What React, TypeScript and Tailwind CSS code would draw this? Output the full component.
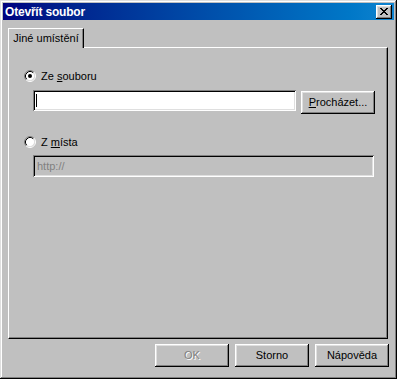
import React from "react"

const raised =
  "bg-[#c0c0c0] shadow-[inset_-1px_-1px_#000000,inset_1px_1px_#ffffff,inset_-2px_-2px_#808080,inset_2px_2px_#dfdfdf]"
const sunken =
  "shadow-[inset_1px_1px_#808080,inset_-1px_-1px_#ffffff,inset_2px_2px_#000000,inset_-2px_-2px_#dfdfdf]"

function Radio({ checked }: { checked?: boolean }) {
  return (
    <svg width="12" height="12" viewBox="0 0 12 12" className="shrink-0">
      <circle cx="6" cy="6" r="4.5" fill="#ffffff" />
      <path d="M2.11 9.89 A5.5 5.5 0 0 1 9.89 2.11" fill="none" stroke="#808080" />
      <path d="M9.89 2.11 A5.5 5.5 0 0 1 2.11 9.89" fill="none" stroke="#ffffff" />
      <path d="M2.82 9.18 A4.5 4.5 0 0 1 9.18 2.82" fill="none" stroke="#000000" />
      <path d="M9.18 2.82 A4.5 4.5 0 0 1 2.82 9.18" fill="none" stroke="#dfdfdf" />
      {checked && <circle cx="6" cy="6" r="2" fill="#000000" />}
    </svg>
  )
}

function Button({ children, disabled }: { children: React.ReactNode; disabled?: boolean }) {
  return (
    <div
      className={`${raised} w-[74px] h-[23px] flex items-center justify-center ${
        disabled ? "text-[#808080] [text-shadow:1px_1px_#ffffff]" : "text-black"
      }`}
    >
      {children}
    </div>
  )
}

export default function App() {
  return (
    <div className="w-[400px] h-[380px] bg-white font-['Liberation_Sans',Arial,sans-serif] text-[11px] text-black">
      <div className="w-[397px] h-[379px] bg-[#c0c0c0] p-[3px] flex flex-col shadow-[inset_-1px_-1px_#000000,inset_1px_1px_#dfdfdf,inset_-2px_-2px_#808080,inset_2px_2px_#ffffff]">
        {/* title bar */}
        <div className="h-[17px] bg-gradient-to-r from-[#000080] to-[#1084d0] flex items-center justify-between pl-[2px] pr-[2px]">
          <span className="text-white font-bold text-[12px] tracking-[-0.2px]">Otevřít soubor</span>
          <div className={`${raised} w-[16px] h-[14px] flex items-center justify-center`}>
            <svg width="8" height="7" viewBox="0 0 8 7">
              <path d="M0 0h2v1h1v1h2v-1h1v-1h2v1h-1v1h-1v1h-1v1h1v1h1v1h1v1h-2v-1h-1v-1h-2v1h-1v1h-2v-1h1v-1h1v-1h1v-1h-1v-1h-1v-1h-1z" fill="#000000" />
            </svg>
          </div>
        </div>

        {/* body */}
        <div className="flex-1 flex flex-col pl-[5px] pr-[6px] pt-[8px] pb-[9px]">
          <div className="flex">
            <div className="h-[20px] w-[76px] border-l border-t border-white shadow-[inset_-1px_0_#808080] border-r border-r-black flex items-center justify-center pb-[1px] -mb-px bg-[#c0c0c0] relative z-10">
              Jiné umístění
            </div>
          </div>
          <div className="flex-1 border-l border-t border-white border-r border-b border-r-black border-b-black shadow-[inset_-1px_-1px_#808080] pl-[15px] pt-[22px]">
            <div className="flex items-center gap-[5px] h-[12px]">
              <Radio checked />
              <span>
                Ze <span className="underline">s</span>ouboru
              </span>
            </div>
            <div className="flex items-start mt-[8px] ml-[9px] gap-[5px]">
              <div className={`${sunken} bg-white w-[263px] h-[21px] flex items-center pl-[3px]`}>
                <div className="w-px h-[13px] bg-black" />
              </div>
              <div className="mt-px">
                <Button>
                  <span>
                    <span className="underline">P</span>rocházet...
                  </span>
                </Button>
              </div>
            </div>
            <div className="flex items-center gap-[5px] h-[12px] mt-[22px]">
              <Radio />
              <span>
                Z <span className="underline">m</span>ísta
              </span>
            </div>
            <div
              className={`${sunken} ml-[9px] mt-[7px] w-[341px] h-[22px] flex items-center pl-[4px] text-[#808080]`}
            >
              http://
            </div>
          </div>
          <div className="flex justify-end gap-[6px] mt-[5px] mr-[-1px]">
            <Button disabled>OK</Button>
            <Button>Storno</Button>
            <Button>Nápověda</Button>
          </div>
        </div>
      </div>
    </div>
  )
}
